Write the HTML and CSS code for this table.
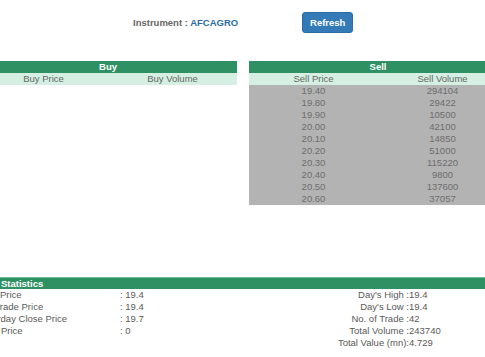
FILE: index.html
```html
<!DOCTYPE html>
<html>
<head>
<meta charset="utf-8">
<title>Market Depth</title>
<link rel="stylesheet" href="styles.css">
</head>
<body>
<div class="page">
  <div class="topbar">
    <span class="instrument">Instrument : <span class="code">AFCAGRO</span></span>
    <button class="btn-refresh">Refresh</button>
  </div>

  <div class="book">
    <table class="depth">
      <thead>
        <tr><th colspan="2" class="caption">Buy</th></tr>
        <tr class="cols"><td>Buy Price</td><td>Buy Volume</td></tr>
      </thead>
      <tbody></tbody>
    </table>

    <table class="depth">
      <thead>
        <tr><th colspan="2" class="caption">Sell</th></tr>
        <tr class="cols"><td>Sell Price</td><td>Sell Volume</td></tr>
      </thead>
      <tbody class="orders">
        <tr><td>19.40</td><td>294104</td></tr>
        <tr><td>19.80</td><td>29422</td></tr>
        <tr><td>19.90</td><td>10500</td></tr>
        <tr><td>20.00</td><td>42100</td></tr>
        <tr><td>20.10</td><td>14850</td></tr>
        <tr><td>20.20</td><td>51000</td></tr>
        <tr><td>20.30</td><td>115220</td></tr>
        <tr><td>20.40</td><td>9800</td></tr>
        <tr><td>20.50</td><td>137600</td></tr>
        <tr><td>20.60</td><td>37057</td></tr>
      </tbody>
    </table>
  </div>

  <div class="stats">
    <div class="stats-head">Statistics</div>
    <div class="stats-body">
      <div class="stats-left">
        <div class="lbl">Open Price</div><div class="val">: 19.4</div>
        <div class="lbl">Last Trade Price</div><div class="val">: 19.4</div>
        <div class="lbl">Yesterday Close Price</div><div class="val">: 19.7</div>
        <div class="lbl">Close Price</div><div class="val">: 0</div>
      </div>
      <div class="stats-right">
        <div class="lbl">Day's High :</div><div class="val">19.4</div>
        <div class="lbl">Day's Low :</div><div class="val">19.4</div>
        <div class="lbl">No. of Trade :</div><div class="val">42</div>
        <div class="lbl">Total Volume :</div><div class="val">243740</div>
        <div class="lbl">Total Value (mn):</div><div class="val">4.729</div>
      </div>
    </div>
  </div>
</div>
</body>
</html>
```

FILE: styles.css
```css
html, body {
  margin: 0;
  padding: 0;
  background: #ffffff;
  overflow: hidden;
}

body {
  font-family: "Liberation Sans", Arial, sans-serif;
  font-size: 9.5px;
  color: #555555;
}

.page {
  width: 530px;
  margin-left: -21px;
}

/* top bar */
.topbar {
  display: flex;
  align-items: center;
  height: 21px;
  margin-top: 12px;
  padding-left: 154px;
}

.instrument {
  font-weight: bold;
  color: #666666;
  font-size: 9.5px;
}

.instrument .code {
  color: #2d6ca2;
}

.btn-refresh {
  margin-left: 64px;
  width: 51px;
  height: 21px;
  padding: 0;
  border: 1px solid #2e6da4;
  border-radius: 3px;
  background: #337ab7;
  color: #ffffff;
  font-family: "Liberation Sans", Arial, sans-serif;
  font-size: 9.5px;
  font-weight: bold;
}

/* order book */
.book {
  display: flex;
  gap: 12px;
  margin-top: 28px;
  align-items: flex-start;
}

.depth {
  width: 258px;
  border-collapse: collapse;
  table-layout: fixed;
}

.depth td,
.depth th {
  padding: 0;
  height: 12px;
  line-height: 12px;
  text-align: center;
  font-size: 9.5px;
}

.depth .caption {
  background: #2f9163;
  color: #ffffff;
  font-weight: bold;
}

.depth .cols td {
  background: #d5f0e2;
  color: #666666;
}

.depth .orders td {
  background: #b3b3b3;
  color: #6e6e6e;
}

/* statistics */
.stats {
  margin-top: 72px;
}

.stats-head {
  height: 11px;
  line-height: 11px;
  border-top: 1px solid #6cc096;
  background: #2f9163;
  color: #ffffff;
  font-weight: bold;
  padding-left: 22px;
}

.stats-body {
  display: flex;
  margin-left: -5px;
}

.stats-left {
  display: grid;
  grid-template-columns: 146px 100px;
  align-content: start;
}

.stats-right {
  display: grid;
  grid-template-columns: 189px auto;
  align-content: start;
}

.stats-body .lbl,
.stats-body .val {
  height: 12px;
  line-height: 12px;
  white-space: nowrap;
  color: #5a5a5a;
}

.stats-right .lbl {
  text-align: right;
}
```
